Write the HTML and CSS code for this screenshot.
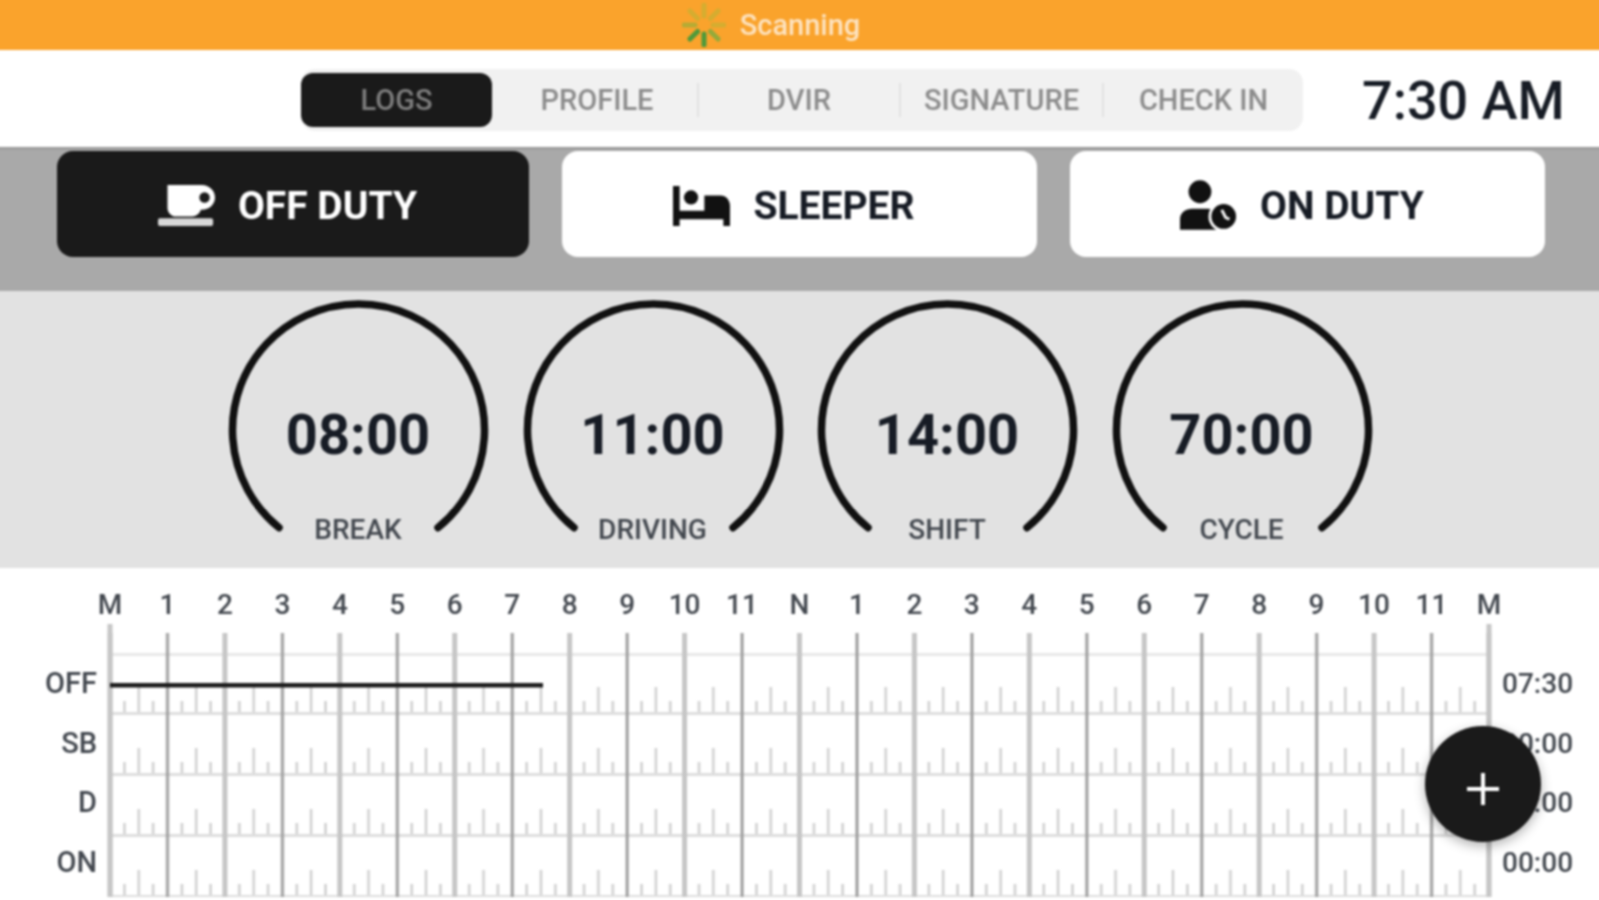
FILE: index.html
```html
<!DOCTYPE html>
<html lang="en">
  <head>
    <meta charset="UTF-8">
    <meta name="viewport" content="width=device-width, initial-scale=1.0">
    <title>logs</title>
    <link rel="stylesheet" href="styles.css">
  </head>
  <body>
    <div class="screen">
      <div class="scan-bar">
        <svg class="spinner" viewBox="-22 -22 44 44">
          <path class="ray ray-1" d="M0 -9V-20"/>
          <path class="ray ray-2" d="M6.4 -6.4L14.1 -14.1"/>
          <path class="ray ray-3" d="M9 0H20"/>
          <path class="ray ray-4" d="M6.4 6.4L14.1 14.1"/>
          <path class="ray ray-5" d="M0 9V20"/>
          <path class="ray ray-6" d="M-6.4 6.4L-14.1 14.1"/>
          <path class="ray ray-7" d="M-9 0H-20"/>
          <path class="ray ray-8" d="M-6.4 -6.4L-14.1 -14.1"/>
        </svg>
        <span>Scanning</span>
      </div>

      <div class="top-bar">
        <div class="tabs">
          <div class="tab tab-active">LOGS</div>
          <div class="tab tab-profile">PROFILE</div>
          <div class="tab tab-line">DVIR</div>
          <div class="tab tab-line">SIGNATURE</div>
          <div class="tab tab-line">CHECK IN</div>
        </div>
        <div class="clock">7:30 AM</div>
      </div>

      <div class="status-bar">
        <button class="status status-active">
          <svg class="status-icon" viewBox="0 0 60 44">
            <path fill="#fff" fill-rule="evenodd" d="M10 0H46C54 0 60 6 60 13C60 20 54 26 46 26H45C44 30 40 33 36 33H19C14 33 10 29 10 24ZM49 7.5A5.5 5.5 0 1 0 49 18.500A5.500 5.500 0 1 0 49 7.5Z"/>
            <rect fill="#d8d8d8" y="35" width="58" height="8" rx="2"/>
          </svg>
          OFF DUTY
        </button>
        <button class="status">
          <svg class="status-icon" viewBox="0 0 60 44">
            <path fill="#111" d="M0 1H7V27H33V11H50C56 11 60 16 60 22V43H53V36H7V43H0Z"/>
            <circle fill="#111" cx="19" cy="13" r="7.5"/>
          </svg>
          SLEEPER
        </button>
        <button class="status">
          <svg class="status-icon" viewBox="0 0 60 54">
            <circle fill="#111" cx="21" cy="12" r="12"/>
            <path fill="#111" d="M0 52V41C0 34 6 30 13 30H29C36 30 42 34 42 41V52Z"/>
            <circle fill="#111" stroke="#fff" stroke-width="3" cx="46" cy="38" r="14.5"/>
            <path fill="none" stroke="#fff" stroke-width="3" d="M44 31L48 39L52 41"/>
          </svg>
          ON DUTY
        </button>
      </div>

      <div class="gauges">
        <div class="gauge">
          <svg class="gauge-arc" viewBox="0 0 260 260"><path d="M50 227.700A126 126 0 1 1 209 227.700"/></svg>
          <div class="gauge-time">08:00</div>
          <div class="gauge-label">BREAK</div>
        </div>
        <div class="gauge">
          <svg class="gauge-arc" viewBox="0 0 260 260"><path d="M50 227.700A126 126 0 1 1 209 227.700"/></svg>
          <div class="gauge-time">11:00</div>
          <div class="gauge-label">DRIVING</div>
        </div>
        <div class="gauge">
          <svg class="gauge-arc" viewBox="0 0 260 260"><path d="M50 227.700A126 126 0 1 1 209 227.700"/></svg>
          <div class="gauge-time">14:00</div>
          <div class="gauge-label">SHIFT</div>
        </div>
        <div class="gauge">
          <svg class="gauge-arc" viewBox="0 0 260 260"><path d="M50 227.700A126 126 0 1 1 209 227.700"/></svg>
          <div class="gauge-time">70:00</div>
          <div class="gauge-label">CYCLE</div>
        </div>
      </div>

      <div class="chart">
        <div class="hours">
          <span>M</span><span>1</span><span>2</span><span>3</span><span>4</span><span>5</span><span>6</span><span>7</span><span>8</span><span>9</span><span>10</span><span>11</span><span>N</span>
          <span>1</span><span>2</span><span>3</span><span>4</span><span>5</span><span>6</span><span>7</span><span>8</span><span>9</span><span>10</span><span>11</span><span>M</span>
        </div>
        <div class="plot">
          <div class="row-labels">
            <div>OFF</div>
            <div>SB</div>
            <div>D</div>
            <div>ON</div>
          </div>
          <svg class="grid" width="1379" height="273" viewBox="0 0 1379 273">
            <defs>
              <pattern id="ticks" width="57.458" height="61" patternUnits="userSpaceOnUse" y="29">
                <rect x="13.2" y="48" width="2.5" height="13" fill="#cfcfcf"/>
                <rect x="27.5" y="34" width="2.5" height="27" fill="#cfcfcf"/>
                <rect x="41.9" y="48" width="2.5" height="13" fill="#cfcfcf"/>
                <rect y="59" width="57.458" height="2" fill="#dedede"/>
              </pattern>
              <pattern id="hour-lines" width="114.917" height="273" patternUnits="userSpaceOnUse" x="-2.5">
                <rect width="5" height="273" fill="#c6c6c6"/>
                <rect x="58.5" width="3" height="273" fill="#9c9c9c"/>
              </pattern>
            </defs>
            <rect y="29" width="1379" height="3" fill="#e8e8e8"/>
            <rect y="29" width="1379" height="244" fill="url(#ticks)"/>
            <rect x="-2.5" y="9" width="1384" height="264" fill="url(#hour-lines)"/>
            <rect x="-2.5" width="5" height="273" fill="#c6c6c6"/>
            <rect x="1376.5" width="5" height="273" fill="#c6c6c6"/>
            <rect x="0" y="59" width="433" height="4.5" fill="#1c1c1c"/>
          </svg>
          <div class="row-totals">
            <div>07:30</div>
            <div>00:00</div>
            <div>00:00</div>
            <div>00:00</div>
          </div>
        </div>
        <button class="fab">
          <svg viewBox="0 0 34 34" width="34" height="34"><path d="M17 1V33M1 17H33"/></svg>
        </button>
      </div>
    </div>
  </body>
</html>
```

FILE: styles.css
```css
* {
  box-sizing: border-box;
}

html, body {
  margin: 0;
  height: 100%;
  overflow: hidden;
  background-color: white;
}

/* 4px bleed on the left and top so the blur doesn't fade at the window edge */
.screen {
  width: 1607px;
  height: 908px;
  margin: -4px 0 0 -4px;
  font-family: Roboto, "Liberation Sans", sans-serif;
  color: #171c25;
  filter: blur(.9px);
}

.scan-bar {
  height: 54px;
  padding: 4px 57px 0 0;
  background-color: #faa32c;
  color: #fde3c0;
  font-size: 29px;
  font-weight: 500;
  display: flex;
  align-items: center;
  justify-content: center;
  gap: 14px;
}
.spinner {
  width: 44px;
  height: 44px;
}
.ray {
  fill: none;
  stroke-width: 5;
  stroke-linecap: round;
  stroke: #d4ad30;
}
.ray-4 { stroke: #94aa3a; }
.ray-5 { stroke: #4f9a3a; }
.ray-6 { stroke: #4f9a3a; }
.ray-7 { stroke: #b5ab34; }

.top-bar {
  height: 97px;
  display: flex;
  align-items: center;
  padding: 3px 0 0 305px;
}
.tabs {
  width: 1002px;
  height: 62px;
  display: grid;
  grid-template-columns: 191px 205px 202px 203px 201px;
  align-items: center;
  background-color: #f1f1f1;
  border-radius: 14px;
}
.tab {
  height: 54px;
  display: flex;
  align-items: center;
  justify-content: center;
  font-size: 29px;
  font-weight: 500;
  color: #8c8c8c;
}
.tab-profile {
  padding-left: 5px;
}
.tab-line {
  border-left: 2px solid #e2e2e2;
  height: 34px;
}
.tab-active {
  background-color: #1a1a1a;
  border-radius: 12px;
  color: #7d7d7d;
}
.clock {
  margin-left: 59px;
  font-size: 54px;
  font-weight: 500;
  white-space: nowrap;
}

.status-bar {
  height: 144px;
  background-color: #a9a9a9;
  display: flex;
  gap: 33px;
  padding: 4px 0 0 61px;
  box-shadow: inset 0 3px 3px -2px #888;
}
.status {
  appearance: none;
  border: 0;
  width: 475px;
  height: 106px;
  padding: 4px 11px 0 0;
  background-color: white;
  border-radius: 16px;
  font: 700 39px Roboto, "Liberation Sans", sans-serif;
  color: #171c25;
  display: flex;
  align-items: center;
  justify-content: center;
  gap: 23px;
}
.status-active {
  width: 472px;
  background-color: #1a1a1a;
  color: white;
}
.status-icon {
  width: 57px;
  height: 52px;
}

.gauges {
  height: 277px;
  background-color: #e2e2e2;
  display: flex;
  gap: 34.5px;
  padding: 9px 0 0 233px;
}
.gauge {
  position: relative;
  width: 260px;
  height: 260px;
  text-align: center;
}
.gauge-arc {
  display: block;
  width: 260px;
  height: 260px;
  overflow: visible;
  path {
    fill: none;
    stroke: #111;
    stroke-width: 7.5;
    stroke-linecap: round;
  }
}
.gauge-time {
  position: absolute;
  left: 0;
  right: 2px;
  top: 100px;
  font-size: 56px;
  font-weight: 700;
  line-height: 70px;
}
.gauge-label {
  position: absolute;
  left: 0;
  right: 2px;
  top: 215px;
  font-size: 28px;
  font-weight: 500;
  line-height: 30px;
  color: #43484f;
}

.chart {
  position: relative;
  padding: 22px 0 0 4px;
  font-size: 28px;
  font-weight: 500;
  color: #43484f;
}
.hours {
  display: grid;
  grid-template-columns: repeat(25, 57.458px);
  padding-left: 81.3px;
  height: 34px;
  line-height: 30px;
  text-align: center;
}
.plot {
  display: grid;
  grid-template-columns: 97px 1379px 1fr;
  column-gap: 13px;
}
.grid {
  overflow: visible;
  display: block;
}
.row-labels, .row-totals {
  padding-top: 30px;
  > div {
    height: 59.5px;
    line-height: 59.5px;
  }
}
.row-labels {
  text-align: right;
  font-size: 29px;
}
.fab {
  position: absolute;
  left: 1429px;
  top: 158px;
  width: 116px;
  height: 116px;
  border: 0;
  padding: 0;
  border-radius: 50%;
  background-color: #1a1a1a;
  box-shadow: 0 4px 12px rgba(0, 0, 0, .3);
  display: flex;
  align-items: center;
  justify-content: center;
  svg {
    margin-top: 10px;
  }
  path {
    stroke: white;
    stroke-width: 4;
    fill: none;
  }
}
```
